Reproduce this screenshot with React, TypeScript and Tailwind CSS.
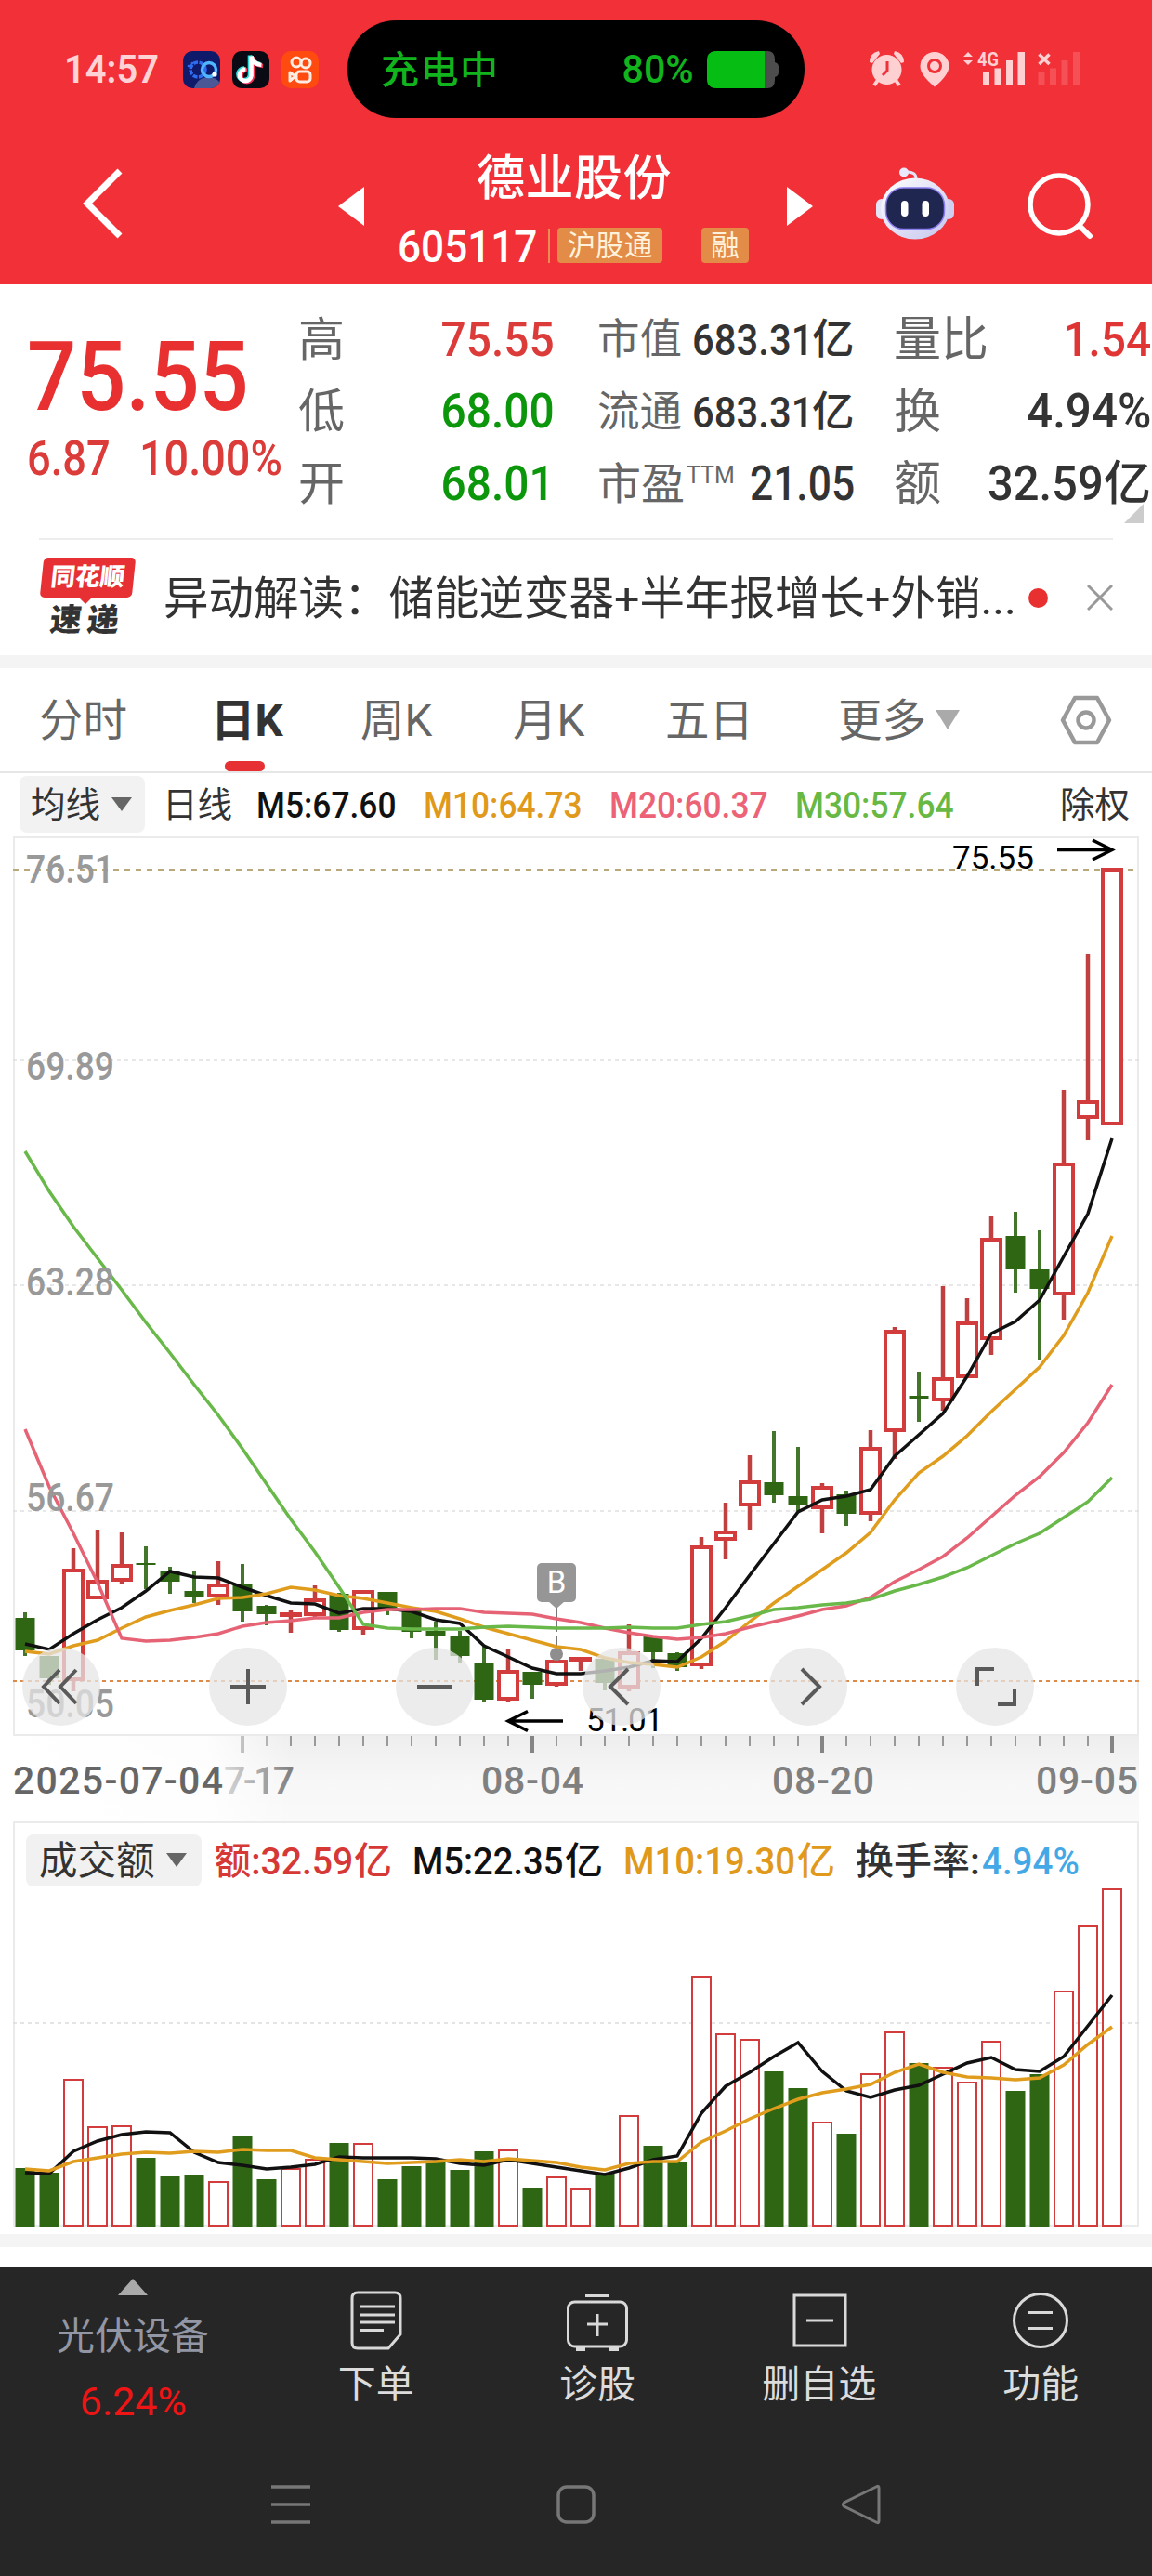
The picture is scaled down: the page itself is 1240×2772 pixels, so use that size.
import React from 'react';
import clsx from 'clsx';

type Direction = 'up' | 'down';

// [direction, high, body top, body bottom, low, volume top]
const candles: [Direction, number, number, number, number, number][] = [
  ['down', 835, 841, 876, 882, 373],
  ['down', 882, 882, 906, 913, 378],
  ['up', 766, 788, 909, 920, 278],
  ['up', 746, 800, 821, 821, 329],
  ['up', 749, 783, 802, 805, 328],
  ['down', 764, 782, 784, 810, 362],
  ['down', 786, 790, 802, 815, 382],
  ['down', 790, 812, 818, 825, 380],
  ['up', 780, 804, 819, 827, 388],
  ['down', 783, 805, 834, 845, 339],
  ['down', 827, 828, 837, 849, 385],
  ['up', 832, 835, 840, 857, 374],
  ['up', 806, 820, 839, 841, 364],
  ['down', 814, 815, 854, 856, 346],
  ['up', 811, 811, 854, 859, 347],
  ['down', 813, 813, 830, 838, 385],
  ['down', 833, 833, 856, 863, 371],
  ['down', 845, 855, 861, 886, 367],
  ['down', 855, 861, 882, 890, 375],
  ['down', 872, 889, 929, 932, 355],
  ['up', 874, 897, 930, 932, 354],
  ['down', 899, 899, 913, 928, 395],
  ['up', 882, 886, 914, 915, 383],
  ['up', 883, 883, 888, 898, 396],
  ['down', 885, 885, 911, 919, 379],
  ['up', 848, 877, 917, 920, 317],
  ['down', 861, 861, 878, 895, 349],
  ['down', 878, 879, 894, 898, 366],
  ['up', 754, 763, 893, 896, 167],
  ['up', 717, 747, 758, 778, 229],
  ['up', 666, 693, 721, 746, 235],
  ['down', 640, 695, 709, 717, 269],
  ['down', 657, 710, 720, 726, 287],
  ['up', 696, 699, 724, 750, 324],
  ['down', 704, 708, 729, 742, 336],
  ['up', 639, 657, 730, 737, 272],
  ['up', 528, 531, 641, 670, 227],
  ['down', 576, 602, 605, 630, 260],
  ['up', 484, 582, 608, 618, 265],
  ['up', 497, 522, 583, 583, 281],
  ['up', 409, 432, 542, 558, 237],
  ['down', 404, 430, 466, 491, 290],
  ['down', 424, 466, 487, 563, 272],
  ['up', 273, 351, 494, 520, 183],
  ['up', 127, 284, 304, 327, 113],
  ['up', 34, 34, 311, 311, 73],
];

const priceLines = [
  {
    color: '#111111',
    values: [
      869, 875, 858, 843, 830, 812, 791, 797, 798, 808, 817, 825, 826, 836, 831, 831, 834, 843, 847, 871, 883, 895, 901,
      901, 898, 894, 887, 888, 863, 830, 795, 761, 727, 714, 710, 703, 667, 644, 621, 581, 535, 522, 499, 452, 406, 325,
    ],
  },
  {
    color: '#e09d1d',
    values: [
      877, 880, 871, 865, 852, 840, 833, 827, 820, 819, 815, 808, 811, 817, 820, 825, 830, 834, 842, 851, 858, 865, 872,
      875, 884, 889, 891, 894, 883, 866, 845, 825, 807, 789, 771, 749, 714, 685, 667, 645, 619, 595, 571, 537, 491, 430,
    ],
  },
  {
    color: '#e66375',
    values: [
      638, 700, 750, 803, 863, 866, 865, 862, 858, 850, 846, 844, 841, 841, 835, 832, 832, 831, 831, 835, 836, 837, 842,
      846, 852, 857, 861, 864, 862, 858, 851, 845, 839, 832, 828, 819, 802, 789, 775, 755, 732, 709, 689, 663, 631, 590,
    ],
  },
  {
    color: '#69b94a',
    values: [
      339, 382, 420, 454, 488, 523, 556, 590, 623, 659, 697, 735, 770, 808, 848, 852, 853, 853, 853, 851, 850, 851, 852,
      852, 852, 851, 852, 852, 848, 845, 839, 832, 830, 827, 825, 821, 812, 805, 797, 787, 774, 761, 750, 733, 716, 690,
    ],
  },
];

const volumeLines = [
  {
    color: '#111111',
    values: [
      378, 379, 355, 344, 337, 334, 335, 356, 367, 370, 374, 372, 369, 361, 362, 362, 362, 363, 368, 370, 364, 368, 372,
      376, 380, 373, 364, 360, 314, 285, 270, 253, 238, 269, 290, 297, 289, 284, 272, 260, 254, 267, 269, 253, 220, 187,
    ],
  },
  {
    color: '#e09d1d',
    values: [
      374, 376, 366, 362, 358, 356, 357, 355, 356, 353, 354, 354, 362, 364, 366, 368, 367, 366, 364, 366, 363, 365, 367,
      372, 375, 368, 366, 366, 345, 333, 320, 309, 299, 292, 288, 283, 270, 261, 270, 275, 276, 278, 276, 262, 240, 221,
    ],
  },
];

const RED = '#d33c3c';
const GREEN = '#2f6613';

const xAt = (index: number) => 27 + index * 26;
const toPoints = (values: number[]) => values.map((y, i) => `${xAt(i)},${y}`).join(' ');

interface NumProps {
  className?: string;
  children: React.ReactNode;
}

// Digits are drawn slightly condensed
const Num: React.FC<NumProps> = ({ className, children }) => (
  <span className={clsx('inline-block whitespace-nowrap', className)}>{children}</span>
);

const Caret: React.FC<{ className?: string }> = ({ className }) => (
  <svg viewBox="0 0 22 15" className={clsx('w-[22px] h-[15px] shrink-0', className)}>
    <path d="M0 0h22L11 15z" fill="currentColor" />
  </svg>
);

const StatusBar = () => (
  <div className="flex h-[127px] pt-[22px]">
    <div className="flex h-[105px] w-[374px] items-center pl-[69px]">
      <Num className="w-[128px] origin-left scale-x-[0.950] text-[42px] leading-none font-semibold text-[#ffd3d5]">
        14:57
      </Num>
      <div className="flex gap-[13px]">
        <svg viewBox="0 0 40 40" className="h-10 w-10 rounded-[10px] bg-[#101a6b]">
          <path d="M12 40a16 16 0 0 1 28-6v6z" fill="#4c5796" />
          <circle cx="16" cy="20" r="8" fill="none" stroke="#2f6cf0" strokeWidth="3.500" strokeDasharray="5 1.500" />
          <circle cx="28" cy="20" r="7.500" fill="none" stroke="#4fb6ff" strokeWidth="3.500" />
          <circle cx="34" cy="25" r="2.600" fill="#fff" />
          <circle cx="6" cy="16" r="1.300" fill="#2f6cf0" />
          <circle cx="10" cy="13" r="1.300" fill="#2f6cf0" />
        </svg>
        <svg viewBox="0 0 40 40" className="h-10 w-10 rounded-[10px] bg-[#0a0a14]">
          <g fill="none" strokeWidth="4.600">
            <path
              d="M20 5v21a6.300 6.300 0 1 1-6-7M20 5c1 6 5 9 11 9.500"
              stroke="#2be0dc"
              transform="translate(-1 -0.500)"
            />
            <path
              d="M20 5v21a6.300 6.300 0 1 1-6-7M20 5c1 6 5 9 11 9.500"
              stroke="#f52f55"
              transform="translate(2 1.500)"
            />
            <path
              d="M20 5v21a6.300 6.300 0 1 1-6-7M20 5c1 6 5 9 11 9.500"
              stroke="#fff"
              transform="translate(0.500 0.500)"
            />
          </g>
        </svg>
        <svg viewBox="0 0 40 40" className="h-10 w-10 rounded-[10px] bg-[#ff4b0f]">
          <g fill="none" stroke="#ffece2" strokeWidth="3">
            <circle cx="16" cy="12" r="5" />
            <circle cx="26" cy="13" r="5" />
            <rect x="16" y="22" width="15" height="11" rx="3.500" />
            <path d="M15 27l-6-4v9z" strokeLinejoin="round" />
          </g>
        </svg>
      </div>
    </div>

    <div className="flex h-[105px] w-[492px] items-center rounded-[52px] bg-black pr-[28px] pl-[36px] leading-none text-[#12b41d]">
      <span className="pt-[3px] text-[41px] font-medium tracking-[1.500px]">充电中</span>
      <Num className="ml-auto origin-right scale-x-[0.980] text-[42px] font-medium">80%</Num>
      <svg viewBox="0 0 77 40" className="ml-[14px] h-10 w-[77px]">
        <path d="M62 0h3q8 0 8 9v3q4 1 4 5v6q0 4-4 5v3q0 9-8 9h-3z" fill="#4d4d4d" />
        <path d="M62 0v40H10Q0 40 0 30V10Q0 0 10 0z" fill="#05bd13" />
      </svg>
    </div>

    <svg viewBox="936 22 304 105" className="ml-[70px] h-[105px] w-[304px]" fill="#ffd0d2">
      <circle cx="954.500" cy="75" r="16" />
      <path d="M936 67q0-10 10-12l1 3-8 10zM973 67q0-10-10-12l-1 3 8 10z" />
      <path d="M945 86l-4 6M964 86l4 6" stroke="#ffd0d2" strokeWidth="4" />
      <path d="M955 66v10l-5 5" fill="none" stroke="#f13138" strokeWidth="3" />
      <path d="M1006 56a15.500 15.500 0 0 1 15.500 15.500q0 9-15.500 22-15.500-13-15.500-22A15.500 15.500 0 0 1 1006 56z" />
      <circle cx="1006" cy="71" r="6.500" fill="none" stroke="#f13138" strokeWidth="3" />
      <path d="M1037 61l5-5 5 5zM1037 65l5 5 5-5z" />
      <text x="1052" y="71" fontSize="21" fontWeight="700" textLength="23" lengthAdjust="spacingAndGlyphs">
        4G
      </text>
      <path d="M1058 78h7v14h-7zM1070.500 73.500h7v18.500h-7zM1083 65h7v27h-7zM1095.500 56h7.500v36h-7.500z" />
      <path
        d="M1117.500 78h7v14h-7zM1130 73.500h7v18.500h-7zM1142.500 65h7v27h-7zM1155 56h7.500v36h-7.500z"
        opacity="0.200"
      />
      <path d="M1118.500 58.500l11 10.500M1129.500 58.500l-11 10.500" stroke="#ffd0d2" strokeWidth="3.500" />
    </svg>
  </div>
);

const Robot = () => (
  <svg viewBox="0 0 84 78" className="h-[78px] w-[84px]">
    <defs>
      <linearGradient id="shell" x1="0" y1="0" x2="1" y2="1">
        <stop offset="0" stopColor="#ffffff" />
        <stop offset="1" stopColor="#c5c5ef" />
      </linearGradient>
    </defs>
    <path d="M43 14q1-10-12-9" fill="none" stroke="#e3e3fa" strokeWidth="3" />
    <circle cx="30" cy="5.500" r="5" fill="#e9e9fb" />
    <rect x="0" y="34" width="12" height="22" rx="6" fill="#e4e4f7" />
    <rect x="72" y="34" width="12" height="22" rx="6" fill="#cfcff2" />
    <ellipse cx="42" cy="44.500" rx="37" ry="33" fill="url(#shell)" />
    <rect x="10.500" y="22" width="63" height="44.500" rx="19" fill="#1f2750" stroke="#8c7df0" strokeWidth="1.500" />
    <rect x="27" y="36" width="7.500" height="17" rx="3.700" fill="#fff" />
    <rect x="49.500" y="36" width="7.500" height="17" rx="3.700" fill="#fff" />
  </svg>
);

const TitleBar = () => (
  <div className="flex h-[179px]">
    <svg viewBox="0 0 364 179" className="h-[179px] w-[364px] text-white">
      <path d="M129 57L94 92l35 35" fill="none" stroke="currentColor" strokeWidth="7" />
    </svg>
    <div className="flex w-[511px]">
      <svg viewBox="0 0 28 42" className="mt-[74px] h-[42px] w-7">
        <path d="M28 0v42L0 21z" fill="#fff" />
      </svg>
      <div className="flex w-[455px] flex-col pt-[39px] text-white">
        <h1 className="pl-[121px] text-[52px] leading-[54px] font-medium tracking-[0.500px] whitespace-nowrap">
          德业股份
        </h1>
        <div className="mt-[25px] flex h-[38px] items-center pl-[36px] leading-none">
          <Num className="w-[162px] origin-left scale-x-[0.900] pt-[2px] text-[49px] font-medium">605117</Num>
          <span className="h-[37px] w-[2px] bg-[#ea8a55]" />
          <span className="ml-2 w-[113px] rounded-[4px] bg-[#e28c48] pt-px text-center text-[30.500px] leading-[37px] text-[#fff2dc]">
            沪股通
          </span>
          <span className="ml-[42px] w-[51px] rounded-[4px] bg-[#e28c48] pt-px text-center text-[30.500px] leading-[37px] text-[#fff2dc]">
            融
          </span>
        </div>
      </div>
      <svg viewBox="0 0 28 42" className="mt-[74px] h-[42px] w-7">
        <path d="M0 0v42l28-21z" fill="#fff" />
      </svg>
    </div>
    <div className="flex pt-[53px] pl-[68px]">
      <Robot />
      <svg viewBox="0 0 72 74" className="mt-[6px] ml-[79px] h-[74px] w-[72px]" fill="none" stroke="#fff">
        <circle cx="34" cy="34" r="31" strokeWidth="5.500" />
        <path d="M56 57l11 11" strokeWidth="6" strokeLinecap="round" />
      </svg>
    </div>
  </div>
);

const Quote = () => (
  <section className="relative flex h-[273px] pt-[21px] leading-none text-[#333]">
    <div className="w-[321px] pt-[27px] pl-[29px]">
      <Num className="block origin-left scale-x-[0.900] text-[104px] font-medium text-[#e93030]">75.55</Num>
      <div className="mt-[10px] flex text-[52px] font-medium text-[#db3b39]">
        <Num className="w-[121px] origin-left scale-x-[0.870]">6.87</Num>
        <Num className="origin-left scale-x-[0.900]">10.00%</Num>
      </div>
    </div>
    <div className="mr-[46px] w-[276px] text-[50px]">
      {[
        ['高', '75.55', 'text-[#db3b39]'],
        ['低', '68.00', 'text-[#0c960c]'],
        ['开', '68.01', 'text-[#0c960c]'],
      ].map(([label, value, color]) => (
        <div key={label} className="flex h-[77.500px] items-center justify-between">
          <span className="text-[#666]">{label}</span>
          <Num className={clsx('origin-right scale-x-[0.920] text-[52px] font-medium', color)}>{value}</Num>
        </div>
      ))}
    </div>
    <div className="mr-[42px] w-[277px] text-[45.500px]">
      {[
        ['市值', '683.31'],
        ['流通', '683.31'],
      ].map(([label, value]) => (
        <div key={label} className="flex h-[77.500px] items-center">
          <span className="w-[102px] text-[#666]">{label}</span>
          <Num className="w-[129px] origin-left scale-x-[0.890] text-[47px] font-medium">{value}</Num>
          <span className="font-medium">亿</span>
        </div>
      ))}
      <div className="flex h-[77.500px] items-center whitespace-nowrap">
        <span className="w-[96px] shrink-0 text-[47px] text-[#666]">市盈</span>
        <span className="mb-[18px] w-[50px] shrink-0 text-[25px] text-[#666]">TTM</span>
        <Num className="ml-auto origin-right scale-x-[0.870] text-[51px] font-medium">21.05</Num>
      </div>
    </div>
    <div className="w-[277px] text-[51px]">
      <div className="flex h-[77.500px] items-center justify-between">
        <span className="text-[#666]">量比</span>
        <Num className="origin-right scale-x-[0.920] text-[52px] font-medium text-[#e03535]">1.54</Num>
      </div>
      <div className="flex h-[77.500px] items-center justify-between">
        <span className="text-[#666]">换</span>
        <Num className="origin-right scale-x-[0.950] text-[52px] font-medium">4.94%</Num>
      </div>
      <div className="flex h-[77.500px] items-center">
        <span className="text-[#666]">额</span>
        <Num className="ml-auto origin-right scale-x-[0.940] text-[52px] font-medium">32.59</Num>
        <span className="font-medium">亿</span>
      </div>
    </div>
    <svg viewBox="0 0 21 21" className="absolute top-[236px] left-[1210px] h-[21px] w-[21px]">
      <path d="M21 0v21H0z" fill="#ccc" />
    </svg>
  </section>
);

const News = () => (
  <section className="mx-[42px] flex h-[126px] items-center border-t-2 border-[#ededed]">
    <div className="mb-[2px] w-[134px] leading-none">
      <div className="ml-[3px] flex h-[43px] w-[99px] -skew-x-6 items-center justify-center rounded-[5px] bg-[#e63033]">
        <span className="text-[26.500px] font-black text-white">同花顺</span>
      </div>
      <svg viewBox="0 0 14 7" className="ml-[43px] h-[7px] w-[14px]">
        <path d="M0 0h14L7 7z" fill="#e63033" />
      </svg>
      <div className="ml-[12px] flex -skew-x-6 gap-[6px] text-[34px] font-black text-[#333]">
        <span>速</span>
        <span>递</span>
      </div>
    </div>
    <p className="w-[931px] pt-[4px] text-[48.500px] leading-none whitespace-nowrap text-[#333]">
      异动解读：储能逆变器+半年报增长+外销...
    </p>
    <span className="h-[21px] w-[21px] shrink-0 rounded-full bg-[#e93030]" />
    <svg viewBox="0 0 28 28" className="ml-[42px] h-7 w-7 shrink-0" stroke="#999" strokeWidth="3">
      <path d="M1 1l26 26M27 1L1 27" />
    </svg>
  </section>
);

const Tabs = () => (
  <nav className="flex h-[113px] items-center border-b-2 border-[#e6e6e6] pl-[42px] text-[47.500px] leading-none text-[#666]">
    <span className="w-[185px] pt-[5px]">分时</span>
    <div className="relative flex h-full w-[161px] items-center pt-[5px] font-bold text-[#333]">
      日K
      <span className="absolute bottom-0 left-[15px] h-[11px] w-[43px] rounded-full bg-[#e63033]" />
    </div>
    <span className="w-[164px] pt-[5px]">周K</span>
    <span className="w-[164px] pt-[5px]">月K</span>
    <span className="w-[186px] pt-[5px]">五日</span>
    <span className="pt-[5px]">更多</span>
    <svg viewBox="0 0 26 21" className="ml-[10px] h-[21px] w-[26px]">
      <path d="M0 0h26L13 21z" fill="#aaa" />
    </svg>
    <svg viewBox="0 0 56 54" className="ml-[108px] h-[54px] w-14" fill="none" stroke="#999">
      <path d="M16 3h24l13 24-13 24H16L3 27z" strokeWidth="4.500" strokeLinejoin="round" />
      <circle cx="28" cy="27" r="8.500" strokeWidth="4.500" />
    </svg>
  </nav>
);

const Averages = () => (
  <div className="mb-px flex h-[67px] items-center pl-[21px] text-[37.500px] leading-none text-[#333]">
    <div className="mr-[19px] flex h-[61px] w-[135px] items-center rounded-lg bg-[#f2f2f2] pt-[3px] pl-[12px]">
      均线
      <Caret className="mb-[3px] ml-[12px] text-[#666]" />
    </div>
    <div className="flex items-center pt-[3px]">
      <span className="w-[101px]">日线</span>
      <Num className="w-[180px] origin-left scale-x-[0.930] text-[38px] font-medium text-[#111]">M5:67.60</Num>
      <Num className="w-[200px] origin-left scale-x-[0.930] text-[38px] font-medium text-[#e0991a]">M10:64.73</Num>
      <Num className="w-[200px] origin-left scale-x-[0.930] text-[38px] font-medium text-[#ec6276]">M20:60.37</Num>
      <Num className="w-[285px] origin-left scale-x-[0.930] text-[38px] font-medium text-[#68b944]">M30:57.64</Num>
      <span>除权</span>
    </div>
  </div>
);

const controls = [
  'M-2 -18L-19 0L-2 18M16 -18L-1 0L16 18',
  'M-19 0H19M0 -19V19',
  'M-19 0H19',
  'M7 -19L-12 0L7 19',
  'M-7 -19L12 0L-7 19',
  'M-19 -1V-19H-1M21 2V19H3',
];

const PriceChart = () => (
  <div className="relative h-[1060px]">
    <svg viewBox="0 0 1240 1060" className="h-[1060px] w-[1240px]">
      <defs>
        <linearGradient id="axisFade" x1="0" y1="0" x2="0" y2="1">
          <stop offset="0" stopColor="#eeeeee" />
          <stop offset="0.500" stopColor="#f7f7f7" />
          <stop offset="1" stopColor="#fafafa" />
        </linearGradient>
        <linearGradient id="axisLeft" x1="0" y1="0" x2="1" y2="0">
          <stop offset="0" stopColor="#fff" />
          <stop offset="0.700" stopColor="#fff" stopOpacity="0.850" />
          <stop offset="1" stopColor="#fff" stopOpacity="0" />
        </linearGradient>
      </defs>

      <rect x="15" y="1" width="1210" height="966" fill="none" stroke="#ebebeb" strokeWidth="2" />
      {[241, 483, 726].map((y) => (
        <line key={y} x1="14" x2="1226" y1={y} y2={y} stroke="#e0e0e0" strokeWidth="1.500" strokeDasharray="4 4" />
      ))}
      <line x1="14" x2="1220" y1="36" y2="36" stroke="#b9a97a" strokeWidth="2" strokeDasharray="6 6" />
      <line x1="14" x2="1226" y1="909" y2="909" stroke="#dd8a48" strokeWidth="2" strokeDasharray="4 4" />

      {candles.map(([dir, high, top, bottom, low], i) => {
        const x = xAt(i);
        if (dir === 'down') {
          return (
            <g key={i} fill={GREEN}>
              <rect x={x - 2} y={high} width="4" height={low - high} opacity="0.900" />
              <rect x={x - 10.5} y={top} width="21" height={bottom - top} />
            </g>
          );
        }
        return (
          <g key={i}>
            <path d={`M${x} ${high}V${top + 1}M${x} ${bottom - 1}V${low}`} stroke="#c04040" strokeWidth="4.500" />
            <rect
              x={x - 10}
              y={top + 2}
              width="20"
              height={Math.max(bottom - top - 4, 1)}
              fill="#fff"
              stroke={RED}
              strokeWidth="4"
            />
          </g>
        );
      })}

      <line x1="599" x2="599" y1="830" y2="880" stroke="#777" strokeWidth="2" strokeDasharray="26 5" />
      <circle cx="599" cy="880" r="7" fill="#8e8e8e" />
      {priceLines.map((line) => (
        <polyline key={line.color} points={toPoints(line.values)} fill="none" stroke={line.color} strokeWidth="3.500" />
      ))}
      <g fill="#999" fontSize="42" fontWeight="500">
        {[
          ['76.51', 50],
          ['69.89', 262],
          ['63.28', 494],
          ['56.67', 726],
          ['50.05', 948],
        ].map(([label, y]) => (
          <text key={label} x="28" y={y} textLength="95" lengthAdjust="spacingAndGlyphs">
            {label}
          </text>
        ))}
      </g>
      <rect x="578" y="782" width="42" height="42" rx="5" fill="#969696" />
      <path d="M590 823h18l-9 8z" fill="#969696" />
      <text x="599" y="814" fontSize="33" fill="#fff" textAnchor="middle">
        B
      </text>

      <g fontSize="35" fill="#000">
        <text x="1025" y="35">
          75.55
        </text>
        <text x="631" y="963" textLength="83">
          51.01
        </text>
      </g>
      <g fill="none" stroke="#000" strokeWidth="3.500">
        <path d="M1138 14.500h58M1176 4l21 10.500L1176 25" />
        <path d="M606 952h-58M568 941.500L547 952l21 10.500" />
      </g>

      {/* date axis */}
      <rect x="14" y="968" width="1212" height="98" fill="url(#axisFade)" />
      {candles.map((_, i) => {
        if (i < 9) return null;
        const major = (i - 9) % 12 === 0;
        return (
          <rect
            key={i}
            x={xAt(i) - (major ? 2 : 1)}
            y="968"
            width={major ? 4 : 2}
            height={major ? 18 : 11}
            fill={major ? '#858585' : '#999'}
          />
        );
      })}
      <g fill="#808080" fontSize="41" fontWeight="500">
        <text x="241" y="1030" textLength="76">
          7-17
        </text>
        <text x="518" y="1030" textLength="110">
          08-04
        </text>
        <text x="831" y="1030" textLength="110">
          08-20
        </text>
        <text x="1115" y="1030" textLength="110">
          09-05
        </text>
      </g>
      <rect x="14" y="968" width="300" height="92" fill="url(#axisLeft)" />
      <text x="14" y="1030" fontSize="41" fontWeight="500" fill="#666" textLength="226">
        2025-07-04
      </text>
    </svg>

    <div className="absolute top-[873px] left-[24px] flex gap-[117px]">
      {controls.map((d) => (
        <button key={d} className="h-[84px] w-[84px] rounded-full bg-[#e6e6e6]/75">
          <svg viewBox="-42 -42 84 84" fill="none" stroke="#5a5a5a" strokeWidth="4">
            <path d={d} />
          </svg>
        </button>
      ))}
    </div>
  </div>
);

const VolumeChart = () => (
  <section className="h-[436px]">
    <div className="mx-[14px] flex h-[70px] items-center border-2 border-b-0 border-[#ebebeb] pt-[14px] pl-[12px] leading-none font-medium">
      <div className="mb-[3px] flex h-[56px] w-[189px] items-center rounded-lg bg-[#f1f1f1] pt-[2px] pl-[14px] text-[41.500px] font-normal text-[#333]">
        成交额
        <Caret className="mb-[2px] ml-[12px] text-[#666]" />
      </div>
      <div className="flex items-center text-[41px]">
        <Num className="ml-[14px] w-[150px] origin-left scale-x-[0.955] text-[#d63836]">额:32.59</Num>
        <span className="w-[63px] text-[#d63836]">亿</span>
        <Num className="w-[164px] origin-left scale-x-[0.930] text-[#111]">M5:22.35</Num>
        <span className="w-[63px] text-[#111]">亿</span>
        <Num className="w-[187px] origin-left scale-x-[0.935] text-[#e0991a]">M10:19.30</Num>
        <span className="w-[63px] text-[#e0991a]">亿</span>
        <span className="w-[136px] text-[#333]">换手率:</span>
        <Num className="origin-left scale-x-[0.940] text-[#45a8e6]">4.94%</Num>
      </div>
    </div>
    <svg viewBox="0 70 1240 366" className="h-[366px] w-[1240px]">
      <path d="M15 70V435H1225V70" fill="none" stroke="#ebebeb" strokeWidth="2" />
      <line x1="14" x2="1226" y1="217" y2="217" stroke="#dcdcdc" strokeWidth="1.500" strokeDasharray="4 4" />
      {candles.map(([dir, , , , , top], i) =>
        dir === 'down' ? (
          <rect key={i} x={xAt(i) - 10.5} y={top} width="21" height={436 - top} fill={GREEN} />
        ) : (
          <rect
            key={i}
            x={xAt(i) - 10}
            y={top}
            width="20"
            height={435 - top}
            fill="#fff"
            stroke={RED}
            strokeWidth="2"
          />
        ),
      )}
      {volumeLines.map((line) => (
        <polyline key={line.color} points={toPoints(line.values)} fill="none" stroke={line.color} strokeWidth="3.500" />
      ))}
    </svg>
  </section>
);

const actions = [
  {
    label: '下单',
    icon: <path d="M10 3h40q6 0 6 6v39l-13 15H10q-6 0-6-6V9q0-6 6-6zM12 18h38M12 27h38M12 35h38M12 43.500h26" />,
  },
  {
    label: '诊股',
    icon: (
      <>
        <rect x="-1.500" y="13" width="63" height="48" rx="7" />
        <path d="M17 6.500h26M30 26v24M19 37h22" />
        <path d="M7 64h10M43 64h10" strokeWidth="4" />
      </>
    ),
  },
  { label: '删自选', icon: <path d="M3 6h55v54H3zM16 33h29" /> },
  {
    label: '功能',
    icon: (
      <>
        <circle cx="30" cy="33" r="28.500" />
        <path d="M17 24.500h26M17 41.500h26" />
      </>
    ),
  },
];

const BottomBar = () => (
  <footer className="h-[333px] bg-[#262626] leading-none">
    <div className="flex h-[187px]">
      <div className="flex w-[286px] flex-col items-center pt-[13px]">
        <svg viewBox="0 0 32 18" className="h-[18px] w-8">
          <path d="M16 0l16 18H0z" fill="#aaa" />
        </svg>
        <span className="mt-[24px] text-[41px] text-[#9296a5]">光伏设备</span>
        <Num className="mt-[29px] scale-x-[1.020] text-[42px] text-[#f01414]">6.24%</Num>
      </div>
      {actions.map(({ label, icon }) => (
        <div key={label} className="flex w-[238.500px] flex-col items-center pt-[25px] pr-[1px]">
          <svg
            viewBox="0 0 60 68"
            className="h-[68px] w-[60px] overflow-visible"
            fill="none"
            stroke="#d9d9d9"
            strokeWidth="3"
          >
            {icon}
          </svg>
          <span className="mt-[14px] text-[41px] text-[#dcdcdc]">{label}</span>
        </div>
      ))}
    </div>
    <div className="flex items-center justify-between px-[292px] pt-[46px]">
      <svg viewBox="0 0 42 46" className="h-[46px] w-[42px]" stroke="#777" strokeWidth="3.500">
        <path d="M0 4h42M0 23h42M0 42h42" />
      </svg>
      <svg viewBox="0 0 42 46" className="h-[46px] w-[42px]" fill="none" stroke="#777" strokeWidth="3.500">
        <rect x="2" y="4" width="38" height="38" rx="9" />
      </svg>
      <svg viewBox="0 0 42 46" className="h-[46px] w-[42px]" fill="none" stroke="#777" strokeWidth="3">
        <path d="M38 3.500q2-1 2 2v35q0 3-2 2L2.500 25q-2-2 0-4z" />
      </svg>
    </div>
  </footer>
);

export default function App() {
  return (
    <main className="w-[1240px] overflow-hidden bg-white font-[Roboto,'Noto_Sans_CJK_SC',sans-serif]">
      <header className="bg-[#f23037]">
        <StatusBar />
        <TitleBar />
      </header>
      <Quote />
      <News />
      <div className="h-[14px] bg-[#f4f4f4]" />
      <Tabs />
      <Averages />
      <PriceChart />
      <VolumeChart />
      <div className="mt-2 h-[14px] bg-[#f4f4f4]" />
      <div className="h-[21px]" />
      <BottomBar />
    </main>
  );
}
